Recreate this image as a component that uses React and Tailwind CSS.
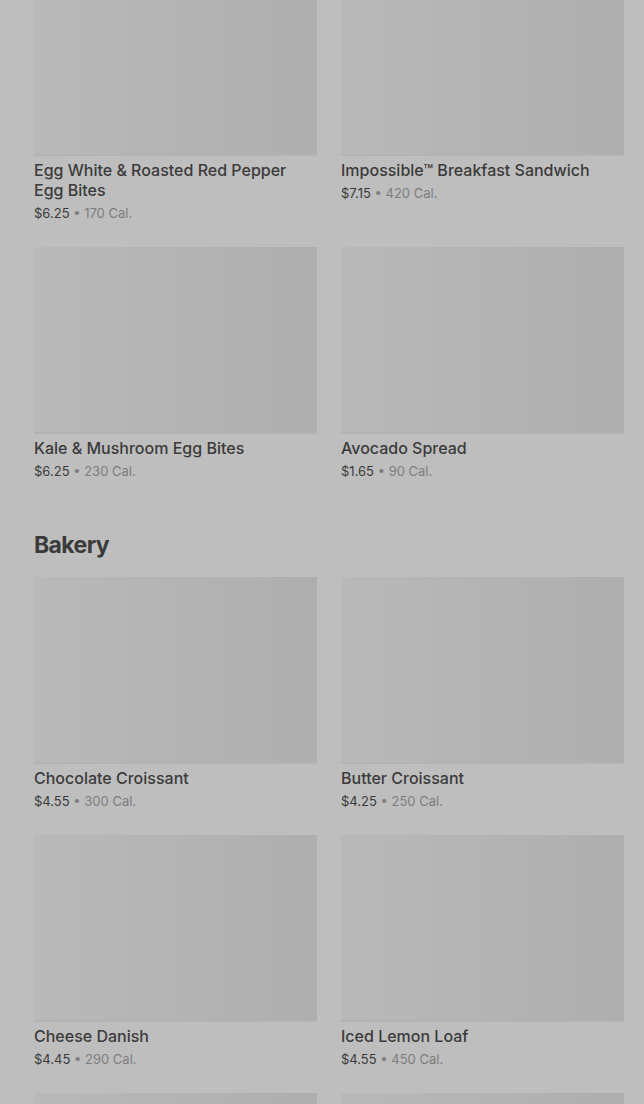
const breakfast = [
  { name: 'Egg White & Roasted Red Pepper Egg Bites', price: '$6.25', cal: '170 Cal.' },
  { name: 'Impossible™ Breakfast Sandwich', price: '$7.15', cal: '420 Cal.' },
  { name: 'Kale & Mushroom Egg Bites', price: '$6.25', cal: '230 Cal.' },
  { name: 'Avocado Spread', price: '$1.65', cal: '90 Cal.' },
]

const bakery = [
  { name: 'Chocolate Croissant', price: '$4.55', cal: '300 Cal.' },
  { name: 'Butter Croissant', price: '$4.25', cal: '250 Cal.' },
  { name: 'Cheese Danish', price: '$4.45', cal: '290 Cal.' },
  { name: 'Iced Lemon Loaf', price: '$4.55', cal: '450 Cal.' },
]

function Photo() {
  return <div className="h-[187px] w-full bg-linear-to-r from-[#b9b9b9] to-[#aeaeae] border-b-2 border-[#b3b3b3]" />
}

function Item({ name, price, cal }) {
  return (
    <div className="flex flex-col">
      <Photo />
      <p className="pt-1 text-[16px] leading-5 font-medium text-[#3b3b3b]">{name}</p>
      <p className="mt-[3px] text-[13px] leading-5 text-[#3b3b3b]">
        {price}
        <span className="text-[#7d7d7d]"> • {cal}</span>
      </p>
    </div>
  )
}

export default function App() {
  return (
    <div
      className="h-[1104px] overflow-hidden bg-[#bebebe] pl-[34px] pr-[20px]"
      style={{ fontFamily: 'Inter, "Noto Sans", sans-serif' }}
    >
      <div className="-mt-[31px] grid grid-cols-2 gap-6">
        {breakfast.map((it) => (
          <Item key={it.name} {...it} />
        ))}
      </div>

      <h2 className="mt-12 mb-4 text-[23px] leading-8 font-bold tracking-[-0.6px] text-[#3a3a3a]">Bakery</h2>
      <div className="grid grid-cols-2 gap-6">
        {bakery.map((it) => (
          <Item key={it.name} {...it} />
        ))}
        {/* next row, only the photos are in view */}
        <Photo />
        <Photo />
      </div>
    </div>
  )
}
